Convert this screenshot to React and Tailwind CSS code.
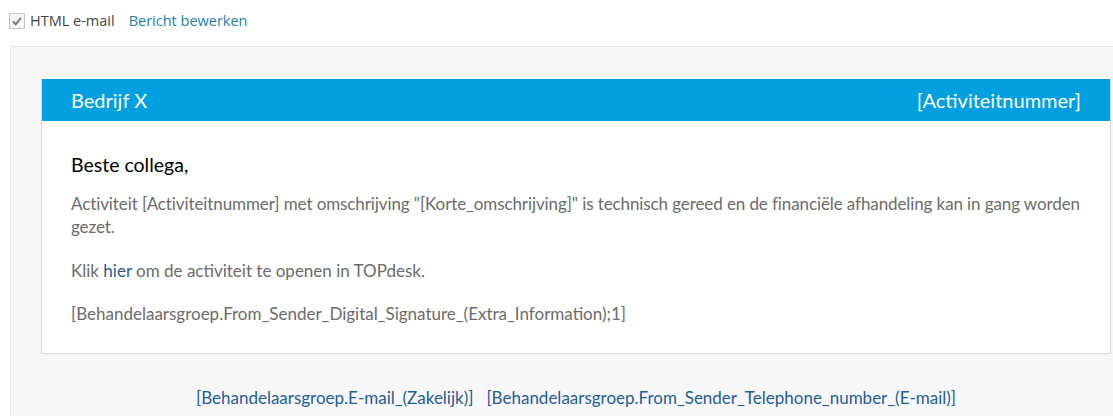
import React from 'react';

const body = { fontFamily: 'Lato, "Open Sans", sans-serif' };

export default function App() {
  return (
    <div className="w-[1113px] h-[416px] overflow-hidden bg-white">
      {/* top toolbar */}
      <div className="flex items-center h-[41px] pl-[9px] text-[14.5px]" style={{ fontFamily: '"Open Sans", sans-serif' }}>
        <span className="w-[16px] h-[16px] border border-[#c4c4c4] bg-[#f4f4f4] flex items-center justify-center">
          <svg width="12" height="12" viewBox="0 0 12 12">
            <path d="M2 6.5 L4.8 9.2 L10 2.8" fill="none" stroke="#7a7a7a" strokeWidth="2" />
          </svg>
        </span>
        <span className="ml-[5px] text-[#444]">HTML e-mail</span>
        <a className="ml-[14px] text-[#1d7fa6]">Bericht bewerken</a>
      </div>

      {/* preview panel */}
      <div className="ml-[10px] mt-[5px] border-t border-l border-[#e6e6e6] bg-[#f7f7f8] pt-[32px] pl-[30px] pr-[2px] h-[400px]" style={body}>
        <div className="bg-white border border-[#d9d9d9] border-t-0">
          <div className="h-[42px] bg-[#009fe0] flex items-center justify-between px-[29px] text-white text-[20px]">
            <span>Bedrijf X</span>
            <span>[Activiteitnummer]</span>
          </div>
          <div className="pl-[29px] pr-[18px] pt-[32px] pb-[28px]">
            <p className="text-[19.5px] text-black leading-[24px]">Beste collega,</p>
            <p className="mt-[15px] text-[17px] leading-[23px] tracking-[-0.1px] text-[#6b6b6b]">
              Activiteit [Activiteitnummer] met omschrijving "[Korte_omschrijving]" is technisch gereed en de financiële afhandeling kan in gang worden gezet.
            </p>
            <p className="mt-[21px] text-[17px] leading-[23px] text-[#6b6b6b]">
              Klik <a className="text-[#1f5c99]">hier</a> om de activiteit te openen in TOPdesk.
            </p>
            <p className="mt-[20px] text-[17px] leading-[23px] text-[#6b6b6b]">
              [Behandelaarsgroep.From_Sender_Digital_Signature_(Extra_Information);1]
            </p>
          </div>
        </div>
        <div className="flex justify-center gap-[13px] pt-[32px] text-[17px] leading-[23px] text-[#1f5c99]">
          <span>[Behandelaarsgroep.E-mail_(Zakelijk)]</span>
          <span>[Behandelaarsgroep.From_Sender_Telephone_number_(E-mail)]</span>
        </div>
      </div>
    </div>
  );
}
